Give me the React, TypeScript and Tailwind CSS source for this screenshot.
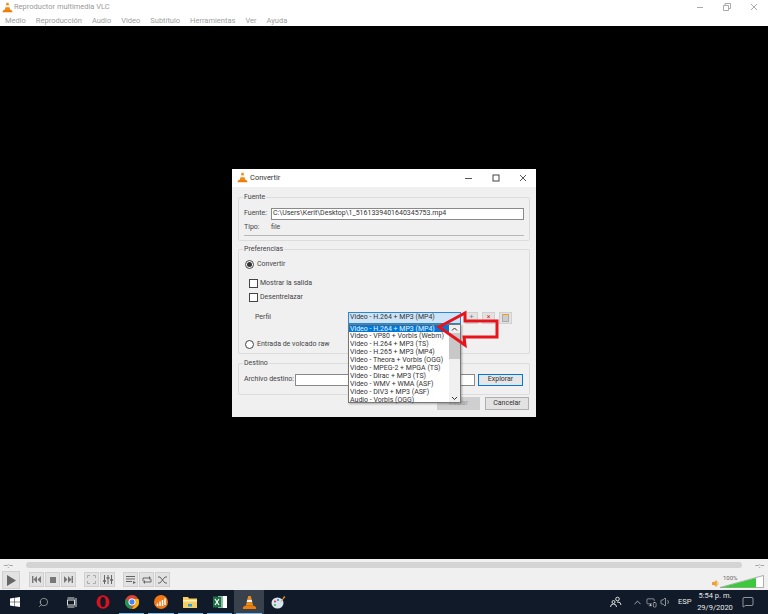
import React from 'react';
import { Search, ChevronUp, MonitorSmartphone, Volume1, MessageSquare } from 'lucide-react';

const menus = ['Medio', 'Reproducción', 'Audio', 'Video', 'Subtítulo', 'Herramientas', 'Ver', 'Ayuda'];

const profiles = [
  'Video - H.264 + MP3 (MP4)',
  'Video - VP80 + Vorbis (Webm)',
  'Video - H.264 + MP3 (TS)',
  'Video - H.265 + MP3 (MP4)',
  'Video - Theora + Vorbis (OGG)',
  'Video - MPEG-2 + MPGA (TS)',
  'Video - Dirac + MP3 (TS)',
  'Video - WMV + WMA (ASF)',
  'Video - DIV3 + MP3 (ASF)',
  'Audio - Vorbis (OGG)',
];

const Cone = ({ size = 12 }: { size?: number }) => (
  <svg width={size} height={size} viewBox="0 0 16 16">
    <path d="M6.6 1h2.8l1 4H5.6z" fill="#f08a12" />
    <path d="M5.6 5h4.8l.6 2.6H5z" fill="#f4f4f4" />
    <path d="M5 7.6h6l1 3.9H4z" fill="#f08a12" />
    <path d="M3.6 11 1 13v2h14v-2l-2.6-2v.6H3.6z" fill="#ee7d0a" />
  </svg>
);

const GroupBox = ({ title, className, children }: { title: string; className: string; children: React.ReactNode }) => (
  <div className={`relative mx-[6px] border border-[#dcdcdc] rounded-[2px] ${className}`}>
    <span className="absolute left-[4px] -top-[6px] bg-[#f0f0f0] px-px text-[#444]">{title}</span>
    {children}
  </div>
);

const Check = ({ label }: { label: string }) => (
  <div className="flex items-center gap-[2px] h-[13px]">
    <span className="w-[9px] h-[9px] bg-white border border-[#444]" />
    <span>{label}</span>
  </div>
);

const Radio = ({ label, on }: { label: string; on?: boolean }) => (
  <div className="flex items-center gap-[3px] h-[13px]">
    <span className="w-[9px] h-[9px] rounded-full bg-white border border-[#444] flex items-center justify-center">
      {on && <span className="w-[5px] h-[5px] rounded-full bg-[#333]" />}
    </span>
    <span>{label}</span>
  </div>
);

const Tool = ({ children, className = 'w-[15px] h-[15px]' }: { children: React.ReactNode; className?: string }) => (
  <div className={`${className} bg-[#e2e2e2] border border-[#d0d0d0] flex items-center justify-center`}>{children}</div>
);

const WinBtn = ({ children }: { children: React.ReactNode }) => (
  <div className="w-[27px] flex items-center justify-center">{children}</div>
);

const Dialog = () => (
  <div className="relative w-[304px] h-[248px] bg-[#f0f0f0] text-[7px] leading-[11px] text-[#444] whitespace-nowrap">
    <div className="h-[18px] bg-white flex items-center pl-[5px]">
      <Cone size={11} />
      <span className="ml-[2px] text-[7.5px] text-[#333]">Convertir</span>
      <div className="ml-auto flex items-center">
        <WinBtn><svg width="8" height="8" viewBox="0 0 8 8"><path d="M0 4.5h7" stroke="#555" /></svg></WinBtn>
        <WinBtn><svg width="8" height="8" viewBox="0 0 8 8"><rect x="1" y="1" width="6" height="6" fill="none" stroke="#444" /></svg></WinBtn>
        <WinBtn><svg width="8" height="8" viewBox="0 0 8 8"><path d="M1 1l6 6M7 1 1 7" stroke="#444" strokeWidth="0.9" /></svg></WinBtn>
      </div>
    </div>

    <div className="flex flex-col pt-[10px]">
      <GroupBox title="Fuente" className="h-[44px] px-[5px]">
        <div className="flex items-center h-[12px] mt-[10px]">
          <span className="w-[27px] shrink-0">Fuente:</span>
          <div className="flex-1 h-[12px] bg-white border border-[#8a8a8a] pl-px flex items-center text-[#333]">
            C:\Users\Kerit\Desktop\1_5161339401640345753.mp4
          </div>
        </div>
        <div className="flex h-[12px] mt-[2px] items-center">
          <span className="w-[27px]">Tipo:</span>
          <span>file</span>
        </div>
        <div className="h-px bg-[#b8b8b8] mt-px" />
      </GroupBox>

      <GroupBox title="Preferencias" className="h-[105px] mt-[8px] px-[5px]">
        <div className="pt-[8px] pl-px">
          <Radio label="Convertir" on />
        </div>
        <div className="flex flex-col gap-px pl-[5px] pt-[6px]">
          <Check label="Mostrar la salida" />
          <Check label="Desentrelazar" />
        </div>
        <div className="flex items-center h-[12px] mt-[8px] pl-[11px]">
          <span className="w-[93px]">Perfil</span>
          <div className="w-[113px] h-[12px] bg-[#cde4f7] border border-[#2f86d0] flex items-center pl-px text-[#333]">
            Video - H.264 + MP3 (MP4)
          </div>
          <div className="flex items-center gap-[4px] ml-[4px]">
            <Tool className="w-[13px] h-[12px]"><span className="text-[#777]">+</span></Tool>
            <Tool className="w-[13px] h-[12px]"><span className="text-[#d22]">×</span></Tool>
            <Tool className="w-[13px] h-[12px]"><span className="w-[7px] h-[8px] bg-[#ccc] border border-[#aaa] border-t-[#f90]" /></Tool>
          </div>
        </div>
        <div className="pt-[14px] pl-px">
          <Radio label="Entrada de volcado raw" />
        </div>
      </GroupBox>

      <GroupBox title="Destino" className="h-[32px] mt-[9px] px-[5px]">
        <div className="flex items-center mt-[10px] h-[12px]">
          <span className="w-[51px] shrink-0">Archivo destino:</span>
          <div className="w-[180px] h-[12px] bg-white border border-[#8a8a8a]" />
          <div className="ml-[3px] w-[45px] h-[12px] bg-[#e6e6e6] border border-[#0078d7] flex items-center justify-center text-[#333]">Explorar</div>
        </div>
      </GroupBox>

      <div className="flex justify-end gap-[5px] pr-[7px] mt-[2px]">
        <div className="w-[43px] h-[13px] bg-[#cfcfcf] flex items-center justify-center text-[#999]">Iniciar</div>
        <div className="w-[44px] h-[13px] bg-[#e2e2e2] border border-[#b0b0b0] flex items-center justify-center text-[#333]">Cancelar</div>
      </div>
    </div>

    {/* lista desplegable del perfil */}
    <div className="absolute left-[116px] top-[155px] w-[113px] h-[79px] bg-white border border-[#777] flex text-[#333] shadow-[1px_1px_2px_rgba(0,0,0,0.3)]">
      <div className="flex-1 min-w-0 flex flex-col">
        {profiles.map((p, i) => (
          <div key={p} className={`h-[7.9px] leading-[8px] pl-px ${i === 0 ? 'bg-[#0078d7] text-[#e8f2fb]' : ''}`}>{p}</div>
        ))}
      </div>
      <div className="w-[11px] bg-[#f0f0f0] flex flex-col items-center">
        <svg width="11" height="8" viewBox="0 0 11 8"><path d="M3 5.500l2.500-2.500L8 5.500" stroke="#333" fill="none" /></svg>
        <div className="w-full h-[26px] bg-[#c8c8c8]" />
        <svg className="mt-auto" width="11" height="8" viewBox="0 0 11 8"><path d="M3 3l2.500 2.500L8 3" stroke="#333" fill="none" /></svg>
      </div>
    </div>

    {/* flecha roja */}
    <svg className="absolute left-[200px] top-[140px]" width="72" height="40" viewBox="0 0 72 40">
      <path d="M7 18 33 4v8h32v16H32l1 8z" fill="none" stroke="#e8141c" strokeWidth="3" />
    </svg>
  </div>
);

const Controls = () => (
  <div className="h-[31px] bg-[#f0f0f0] px-[4px] flex flex-col">
    <div className="flex items-center h-[9px] mt-px">
      <span className="w-[22px] text-[6.5px] leading-[8px] text-[#555] pt-[3px]">--:--</span>
      <div className="w-[716px] h-[6px] rounded-[3px] bg-[#d4d4d4]" />
      <span className="ml-auto text-[6.5px] leading-[8px] text-[#555] pt-[3px]">--:--</span>
    </div>
    <div className="flex items-end -ml-[2px] mt-[2px]">
      <Tool className="w-[18px] h-[18px]">
        <svg width="10" height="11" viewBox="0 0 10 11"><path d="M1 0l9 5.500L1 11z" fill="#666" /></svg>
      </Tool>
      <div className="flex gap-px ml-[9px] mb-[2px]">
        <Tool><svg width="9" height="7" viewBox="0 0 9 7"><path d="M0 0h1.400v7H0zM5 0v7L1.500 3.500zM9 0v7L5.500 3.500z" fill="#777" /></svg></Tool>
        <Tool><span className="w-[6px] h-[6px] bg-[#777]" /></Tool>
        <Tool><svg width="9" height="7" viewBox="0 0 9 7"><path d="M9 0H7.600v7H9zM4 0v7l3.500-3.500zM0 0v7l3.500-3.500z" fill="#777" /></svg></Tool>
      </div>
      <div className="flex gap-px ml-[8px] mb-[2px]">
        <Tool><svg width="9" height="9" viewBox="0 0 9 9"><path d="M.5 3V.5H3M6 .5h2.500V3M8.500 6v2.500H6M3 8.500H.5V6" fill="none" stroke="#aaa" /></svg></Tool>
        <Tool><svg width="10" height="9" viewBox="0 0 10 9"><path d="M1.500 0v9M5 0v9M8.500 0v9" stroke="#666" /><path d="M0 6h3M3.500 3h3M7 5h3" stroke="#666" strokeWidth="1.500" /></svg></Tool>
      </div>
      <div className="flex gap-px ml-[8px] mb-[2px]">
        <Tool><svg width="10" height="8" viewBox="0 0 10 8"><path d="M0 .5h9M0 3h9M0 5.500h6" stroke="#666" /><path d="M7 5v3l3-1.500z" fill="#666" /></svg></Tool>
        <Tool><svg width="10" height="8" viewBox="0 0 10 8"><path d="M1 5V2h7M9 3v3H2" fill="none" stroke="#666" /><path d="M7 0l2 2-2 2zM3 4 1 6l2 2z" fill="#666" /></svg></Tool>
        <Tool><svg width="10" height="8" viewBox="0 0 10 8"><path d="M0 1h2l5 6h2M0 7h2l5-6h2" fill="none" stroke="#666" /></svg></Tool>
      </div>
      <div className="ml-auto w-[52px] h-[14px] flex items-end mb-px">
        <svg width="8" height="9" viewBox="0 0 10 10"><path d="M0 3h2.500L6 .5v9L2.500 7H0z" fill="#f0a030" /><path d="M7 3q1.500 2 0 4" stroke="#f0a030" fill="none" /></svg>
        <div className="relative w-[44px] h-[13px]">
          <svg className="absolute inset-0" width="44" height="13" viewBox="0 0 44 13">
            <path d="M0 12.500 43.500.5v12z" fill="#fff" stroke="#999" strokeWidth="0.8" />
            <path d="M1 12.500 36 3v9.500z" fill="#3cc83c" />
          </svg>
          <span className="absolute left-[3px] -top-[1px] text-[6px] leading-[7px] text-[#666]">100%</span>
        </div>
      </div>
    </div>
  </div>
);

const Slot = ({ children, active, run }: { children: React.ReactNode; active?: boolean; run?: boolean }) => (
  <div className={`relative w-[29.3px] h-[24px] flex items-center justify-center ${active ? 'bg-[#39414c]' : ''}`}>
    {children}
    {run && <span className="absolute left-[2px] right-[2px] bottom-0 h-[1.5px] bg-[#76b9ed]" />}
  </div>
);

const Taskbar = () => (
  <div className="h-[24px] bg-[#101a28] flex items-center text-[#e8e8e8]">
    <Slot>
      <svg width="10" height="10" viewBox="0 0 10 10"><path d="M0 1.400 4.300.8v4H0zM4.800.7 10 0v4.800H4.800zM0 5.300h4.300v4L0 8.600zM4.800 5.300H10V10l-5.200-.7z" fill="#fff" /></svg>
    </Slot>
    <Slot><Search size={11} strokeWidth={1.2} className="-scale-x-100" /></Slot>
    <Slot>
      <svg width="11" height="11" viewBox="0 0 11 11" className="-ml-[3px]"><rect x="1.500" y="3" width="7" height="5" fill="none" stroke="#ddd" /><path d="M1.500 1h7M1.500 10h7M10 1v9" stroke="#ddd" /></svg>
    </Slot>
    <Slot>
      <svg width="14" height="14" viewBox="0 0 14 14"><ellipse cx="7" cy="7" rx="6.500" ry="6.800" fill="#d8121f" /><ellipse cx="7" cy="7" rx="2.700" ry="5" fill="#101a28" /></svg>
    </Slot>
    <Slot run>
      <svg width="14" height="14" viewBox="0 0 14 14"><circle cx="7" cy="7" r="7" fill="#db4437" /><path d="M7 14a7 7 0 0 1-6-10.500L4 8.500z" fill="#0f9d58" /><path d="M7 4h6.400A7 7 0 0 1 7 14l3-5z" fill="#f4b400" /><circle cx="7" cy="7" r="3.200" fill="#4285f4" stroke="#fff" /></svg>
    </Slot>
    <Slot run>
      <svg width="14" height="14" viewBox="0 0 14 14"><circle cx="7" cy="7" r="7" fill="#f07818" /><path d="M3.500 8.500v2.500M6 6.500V11M8.500 5v6M11 3.500V10" stroke="#fff" strokeWidth="1.500" /></svg>
    </Slot>
    <Slot run>
      <svg width="14" height="12" viewBox="0 0 14 12"><path d="M0 1h5l1 1.500h8V12H0z" fill="#f5cf62" /><path d="M0 4h14v1.500H0z" fill="#fff0b8" /><path d="M5 8h4v2.500H5z" fill="#2f9de0" /></svg>
    </Slot>
    <Slot run>
      <svg width="14" height="14" viewBox="0 0 14 14"><rect x="5" y="1" width="9" height="12" fill="#fff" /><path d="M9 1v12" stroke="#1d7044" /><rect y="1.500" width="8" height="11" fill="#1d7044" /><path d="M2 4l4 6M6 4l-4 6" stroke="#fff" strokeWidth="1.200" /></svg>
    </Slot>
    <Slot active run><Cone size={15} /></Slot>
    <Slot>
      <svg width="15" height="14" viewBox="0 0 15 14"><ellipse cx="6.500" cy="8" rx="6" ry="5.500" fill="#d8e4ee" /><circle cx="4" cy="6.500" r="1.100" fill="#e33" /><circle cx="7" cy="5" r="1.100" fill="#3b7de0" /><circle cx="4" cy="10" r="1.100" fill="#3bb54a" /><path d="M9 8l4-7 1.500 1z" fill="#d89030" /></svg>
    </Slot>
    <div className="ml-auto flex items-center h-full text-[7.5px]">
      <svg width="12" height="12" viewBox="0 0 12 12" className="mr-[10px]"><circle cx="7.500" cy="3" r="1.800" fill="none" stroke="#ddd" /><circle cx="3.500" cy="6" r="1.500" fill="none" stroke="#ddd" /><path d="M.5 11q0-3 3-3t3 3M7 6q4-.5 4 3" fill="none" stroke="#ddd" /></svg>
      <ChevronUp size={11} strokeWidth={1.5} />
      <MonitorSmartphone size={11} strokeWidth={1.2} className="ml-[3px]" />
      <Volume1 size={12} strokeWidth={1.2} className="ml-[3px]" />
      <span className="ml-[6px] w-[12px] text-center">ESP</span>
      <div className="ml-[5px] w-[40px] text-center leading-[12px]">
        <div>5:54 p. m.</div>
        <div>29/9/2020</div>
      </div>
      <MessageSquare size={12} strokeWidth={1.2} className="ml-[7px] mr-[14px]" />
    </div>
  </div>
);

const App = () => (
  <div className="w-[768px] h-[614px] flex flex-col overflow-hidden bg-black font-['Roboto',sans-serif]">
    <div className="h-[26px] bg-white shrink-0">
      <div className="h-[14px] flex items-center pl-[2px] text-[7.5px] text-[#9a9a9a]">
        <Cone size={11} />
        <span className="ml-px">Reproductor multimedia VLC</span>
        <div className="ml-auto flex items-center pr-px">
          <WinBtn><svg width="8" height="8" viewBox="0 0 8 8"><path d="M1 4.500h6" stroke="#aaa" /></svg></WinBtn>
          <WinBtn><svg width="8" height="8" viewBox="0 0 8 8"><path d="M.5 2.500h5v5h-5zM2 2.500V.5h5.500v5H5.500" fill="none" stroke="#aaa" /></svg></WinBtn>
          <WinBtn><svg width="8" height="8" viewBox="0 0 8 8"><path d="M1 1l6 6M7 1 1 7" stroke="#aaa" /></svg></WinBtn>
        </div>
      </div>
      <div className="h-[12px] flex items-center pl-[5px] gap-[10px] text-[7.5px] text-[#a0a0a0] pt-px">
        {menus.map((m) => <span key={m}>{m}</span>)}
      </div>
    </div>
    <div className="h-[533px] flex items-center justify-center">
      <Dialog />
    </div>
    <Controls />
    <Taskbar />
  </div>
);

export default App;
